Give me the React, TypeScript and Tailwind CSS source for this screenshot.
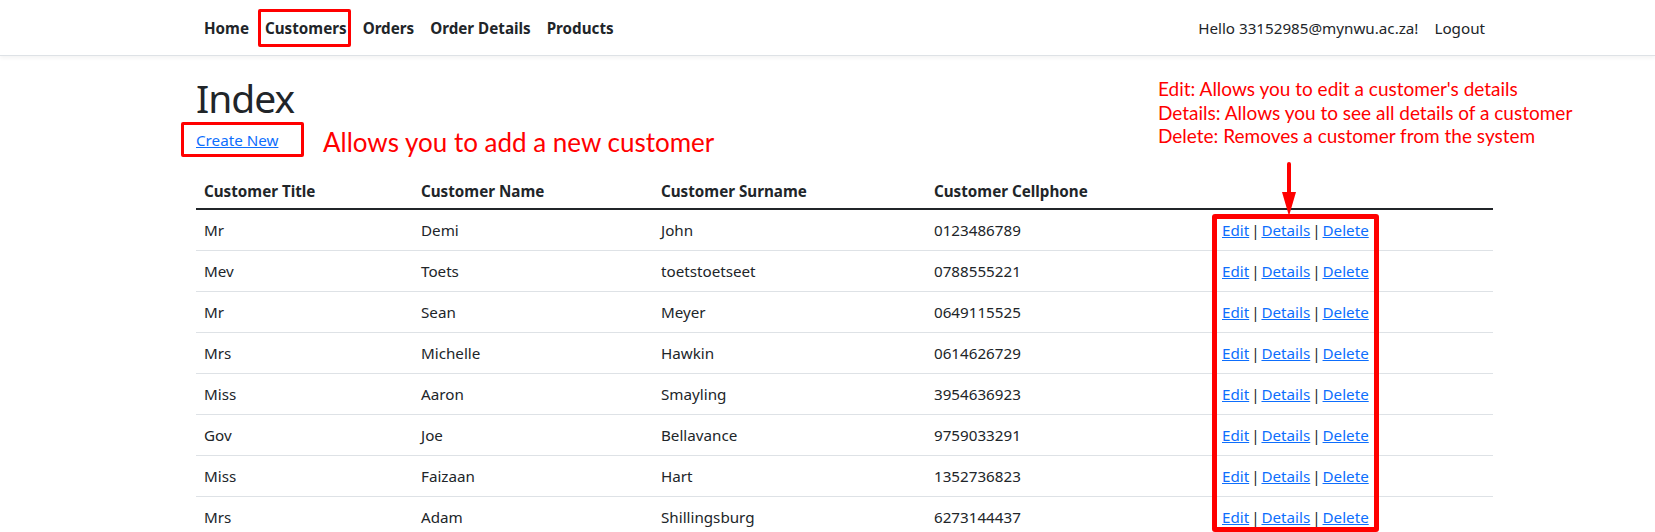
import React from "react";

const rows = [
  ["Mr", "Demi", "John", "0123486789"],
  ["Mev", "Toets", "toetstoetseet", "0788555221"],
  ["Mr", "Sean", "Meyer", "0649115525"],
  ["Mrs", "Michelle", "Hawkin", "0614626729"],
  ["Miss", "Aaron", "Smayling", "3954636923"],
  ["Gov", "Joe", "Bellavance", "9759033291"],
  ["Miss", "Faizaan", "Hart", "1352736823"],
  ["Mrs", "Adam", "Shillingsburg", "6273144437"],
];

const navLinks = ["Home", "Customers", "Orders", "Order Details", "Products"];

export default function App() {
  return (
    <div className="relative h-[532px] w-full overflow-hidden bg-white text-[#212529] font-['Noto_Sans',sans-serif] text-[15.2px] leading-6">
      {/* Navbar */}
      <nav className="h-[56px] border-b border-[#dee2e6] bg-white shadow-[0_2px_4px_rgba(0,0,0,0.05)]">
        <div className="ml-[196px] flex h-full w-[1297px] items-center justify-between">
          <ul className="flex items-center">
            {navLinks.map((l) => (
              <li key={l} className="relative">
                <a className="block px-2 py-2 font-bold text-[#212529]">{l}</a>
                {l === "Customers" && (
                  <span className="absolute left-[1px] top-[1px] h-[38px] w-[93px] rounded-[2px] border-[3px] border-[#ff0000]" />
                )}
              </li>
            ))}
          </ul>
          <ul className="flex items-center">
            <li>
              <span className="block px-2 py-2">Hello 33152985@mynwu.ac.za!</span>
            </li>
            <li>
              <a className="block px-2 py-2">Logout</a>
            </li>
          </ul>
        </div>
      </nav>

      {/* Main */}
      <main className="ml-[196px] mt-[19px] w-[1297px]">
        <h1 className="mb-[6px] text-[39px] font-normal leading-[1.2] tracking-[-1px]">Index</h1>
        <p className="mb-[18px]">
          <span className="relative inline-block">
            <a className="text-[#0d6efd] underline">Create New</a>
            <span className="absolute left-[-15px] top-[-6px] h-[35px] w-[123px] rounded-[2px] border-[3px] border-[#ff0000]" />
          </span>
        </p>

        <table className="w-full table-fixed border-collapse text-left">
          <colgroup>
            <col className="w-[217px]" />
            <col className="w-[240px]" />
            <col className="w-[273px]" />
            <col className="w-[288px]" />
            <col />
          </colgroup>
          <thead>
            <tr className="border-b-2 border-[#212529]">
              <th className="px-2 pt-[9px] pb-[5px] font-bold">Customer Title</th>
              <th className="px-2 pt-[9px] pb-[5px] font-bold">Customer Name</th>
              <th className="px-2 pt-[9px] pb-[5px] font-bold">Customer Surname</th>
              <th className="px-2 pt-[9px] pb-[5px] font-bold">Customer Cellphone</th>
              <th className="px-2 pt-[9px] pb-[5px]"></th>
            </tr>
          </thead>
          <tbody>
            {rows.map((r, i) => (
              <tr key={i} className="border-b border-[#dee2e6]">
                {r.map((c, j) => (
                  <td key={j} className="px-2 py-2">
                    {c}
                  </td>
                ))}
                <td className="px-2 py-2 [word-spacing:-2px]">
                  <a className="text-[#0d6efd] underline">Edit</a> |{" "}
                  <a className="text-[#0d6efd] underline">Details</a> |{" "}
                  <a className="text-[#0d6efd] underline">Delete</a>
                </td>
              </tr>
            ))}
          </tbody>
        </table>
      </main>

      {/* Annotations */}
      <div className="absolute left-[323px] top-[124px] font-['Lato',sans-serif] text-[26px] leading-[36px] text-[#ff0000]">
        Allows you to add a new customer
      </div>
      <div className="absolute left-[1158px] top-[77px] font-['Lato',sans-serif] text-[19px] leading-[23.6px] text-[#ff0000]">
        <div>Edit: Allows you to edit a customer's details</div>
        <div>Details: Allows you to see all details of a customer</div>
        <div>Delete: Removes a customer from the system</div>
      </div>
      <svg className="absolute left-[1281px] top-[162px]" width="16" height="54" viewBox="0 0 16 54">
        <line x1="8" y1="2" x2="8" y2="34" stroke="#ff0000" strokeWidth="4" strokeLinecap="round" />
        <polygon points="1,30 15,30 8,54" fill="#ff0000" />
      </svg>
      <div className="absolute left-[1212px] top-[214px] h-[318px] w-[167px] rounded-[3px] border-[5px] border-[#ff0000]" />
    </div>
  );
}
